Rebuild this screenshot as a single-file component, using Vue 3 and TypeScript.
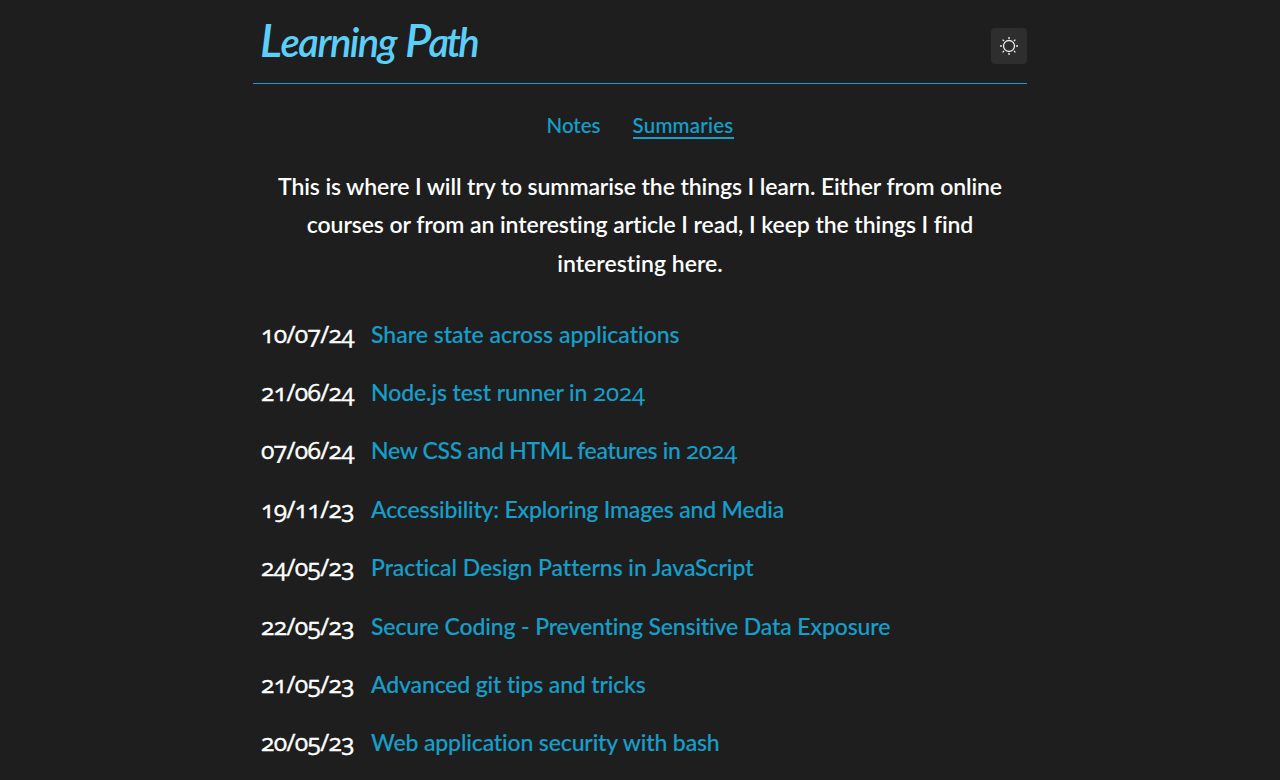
<script setup lang="ts">
import type { Directive } from 'vue'

interface Summary {
  date: string
  dateWidth: number
  title: string
  year?: string
  width: number
}

const intro = [
  { text: 'This is where I will try to summarise the things I learn. Either from online', width: 724 },
  { text: 'courses or from an interesting article I read, I keep the things I find', width: 667 },
  { text: 'interesting here.', width: 166 },
]

const summaries: Summary[] = [
  { date: '10/07/24', dateWidth: 93, title: 'Share state across applications', width: 309 },
  { date: '21/06/24', dateWidth: 93, title: 'Node.js test runner in ', year: '2024', width: 274 },
  { date: '07/06/24', dateWidth: 93, title: 'New CSS and HTML features in ', year: '2024', width: 366 },
  { date: '19/11/23', dateWidth: 93, title: 'Accessibility: Exploring Images and Media', width: 413 },
  { date: '24/05/23', dateWidth: 93, title: 'Practical Design Patterns in JavaScript', width: 382 },
  { date: '22/05/23', dateWidth: 93, title: 'Secure Coding - Preventing Sensitive Data Exposure', width: 520 },
  { date: '21/05/23', dateWidth: 93, title: 'Advanced git tips and tricks', width: 275 },
  { date: '20/05/23', dateWidth: 93, title: 'Web application security with bash', width: 349 },
]

const rays = [0, 45, 90, 135, 180, 225, 270, 315]

// Tracks a line of text so that it fills the given measure.
const vFit: Directive<HTMLElement, number> = {
  mounted(el, { value }) {
    const natural = el.getBoundingClientRect().width
    const count = (el.textContent ?? '').trim().length
    el.style.letterSpacing = `${(value - natural) / count}px`
  },
}
</script>

<template>
  <div class="page">
    <header class="header">
      <a class="logo"><span v-fit="136"><span class="cap">L</span>earning</span><span v-fit="72"><span class="cap">P</span>ath</span></a>
      <button class="theme" type="button" aria-label="Toggle theme">
        <svg width="20" height="20" viewBox="-10 -10 20 20">
          <circle r="5.5" />
          <line v-for="r in rays" :key="r" x1="0" y1="-7.1" x2="0" y2="-9" :transform="`rotate(${r})`" />
        </svg>
      </button>
    </header>
    <nav class="nav">
      <a><span v-fit="54">Notes</span></a>
      <a class="active"><span v-fit="101">Summaries</span></a>
    </nav>
    <p class="intro">
      <span v-for="line in intro" :key="line.text" class="line"><span v-fit="line.width">{{ line.text }}</span></span>
    </p>
    <ul class="list">
      <li v-for="s in summaries" :key="s.date">
        <span class="date"><span v-fit="s.dateWidth">{{ s.date }}</span></span>
        <a><span v-fit="s.width">{{ s.title }}<span v-if="s.year" class="year">{{ s.year }}</span></span></a>
      </li>
    </ul>
  </div>
</template>

<style>
body {
  background: #1e1e1e;
  overflow: hidden;
}
</style>

<style scoped>
.page {
  width: 774px;
  height: 780px;
  overflow: hidden;
  margin: 0 auto;
  color: #fff;
  font-family: Lato, "Noto Sans", sans-serif;
  font-size: 23px;
  font-weight: 500;
  white-space: nowrap;
}
.header {
  box-sizing: border-box;
  height: 84px;
  padding: 8px 0 0 7px;
  border-bottom: 1px solid #1a9dc4;
  display: flex;
  justify-content: space-between;
  align-items: flex-start;
}
.logo {
  display: flex;
  gap: 9px;
  color: #5bcefa;
  font-family: Lato, sans-serif;
  font-style: italic;
  font-size: 40px;
  font-weight: 600;
  line-height: 64px;
}
.cap {
  font-size: 46px;
}
.theme {
  width: 36px;
  height: 36px;
  margin: 20px 0 0;
  padding: 0;
  border: 0;
  border-radius: 4px;
  background: #2e2e2e;
  display: grid;
  place-items: center;
}
.theme svg {
  fill: none;
  stroke: #eee;
  stroke-width: 1.3;
}
.nav {
  display: flex;
  justify-content: center;
  gap: 32px;
  padding-top: 28px;
  height: 27px;
  font-size: 20.5px;
  line-height: 27px;
  color: #179fc9;
}
.nav a {
  height: 25px;
  -webkit-text-stroke: 0.15px currentColor;
}
.nav .active {
  border-bottom: 2px solid #179fc9;
}
.intro {
  margin: 28px 0 0;
  font-weight: 600;
}
.line {
  display: flex;
  justify-content: center;
  height: 38.4px;
  line-height: 38.4px;
}
.list {
  list-style: none;
  margin: 22.5px 0 0;
  padding: 0 0 0 8px;
}
.list li {
  display: flex;
  height: 58.4px;
  line-height: 58.4px;
}
.list a {
  color: #179fc9;
  -webkit-text-stroke: 0.15px currentColor;
}
.date,
.year {
  font-family: "Open Sans", "Noto Sans", sans-serif;
  font-variant-numeric: oldstyle-nums;
}
.date {
  width: 110px;
  font-size: 24.5px;
  font-weight: 500;
  -webkit-text-stroke: 0.4px currentColor;
}
.year {
  font-size: 24px;
  line-height: 1;
}
</style>
